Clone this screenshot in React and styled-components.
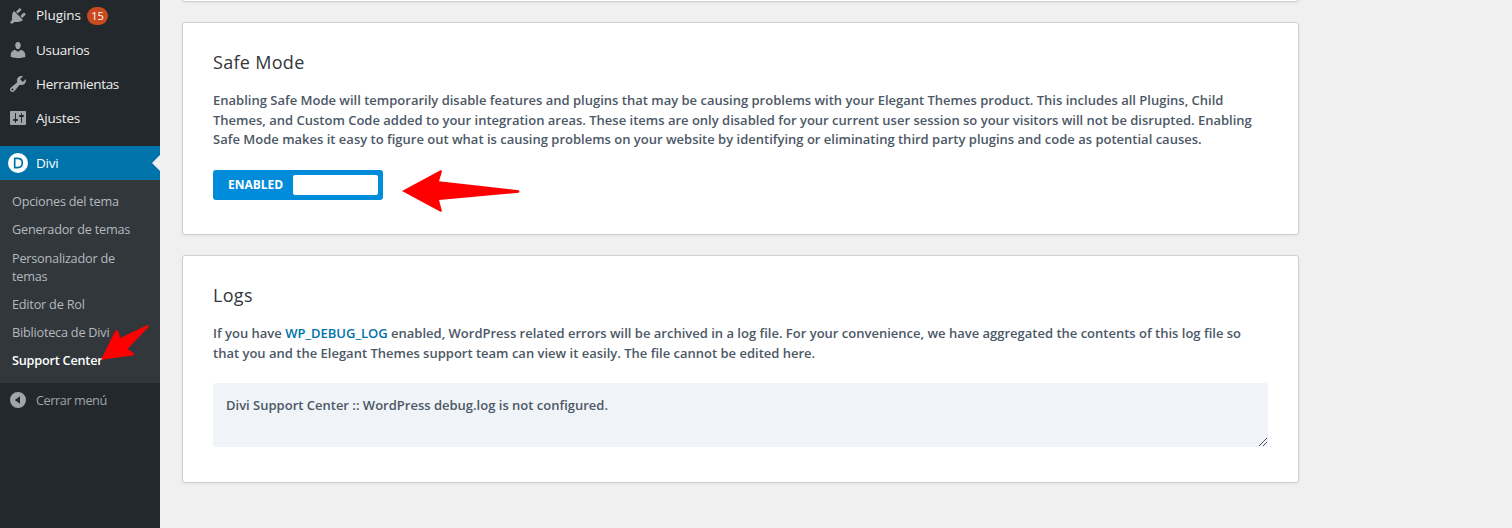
import React from "react";
import styled, { createGlobalStyle, css } from "styled-components";

const GlobalStyle = createGlobalStyle`
  * { box-sizing: border-box; }
  body {
    margin: 0;
    background: #f0f0f0;
    overflow: hidden;
  }
`;
const Page = styled.div`
  display: flex;
  position: relative;
  height: 528px;
  overflow: hidden;
  font-family: "Open Sans", "Noto Sans", sans-serif;
`;
const Sidebar = styled.nav`
  width: 160px;
  flex: none;
  background: #23282d;
  color: #eee;
`;
const Label = styled.span`
  padding-bottom: 1px;
`;
const MenuItem = styled.div`
  display: flex;
  align-items: center;
  position: relative;
  height: 34px;
  padding-left: 8px;
  font-size: 13.5px;
  letter-spacing: ${(props) => props.$spacing || -0.2}px;
  color: #eee;
  ${(props) =>
    props.$current &&
    css`
      background: #0073aa;
      color: #fff;
      /* notch that points at the open page */
      &::after {
        content: "";
        position: absolute;
        right: 0;
        top: 9px;
        border: 8px solid transparent;
        border-right-color: #f0f0f0;
      }
    `}
`;
const MenuList = styled.div`
  margin-top: -1px;
  padding-bottom: 11px;
  ${MenuItem}:first-child ${Label} {
    padding-bottom: 3px;
  }
`;
const Icon = styled.svg`
  width: 20px;
  height: 20px;
  margin-right: 8px;
  flex: none;
  fill: #a0a5aa;
`;
const Count = styled.span`
  width: 21px;
  height: 18px;
  margin-left: 6px;
  border-radius: 9px;
  background: #ca4a1f;
  color: #fff;
  font-size: 11px;
  line-height: 18px;
  text-align: center;
  letter-spacing: 0;
`;
const SubMenu = styled.div`
  height: 203px;
  padding-top: 7px;
  background: #32373c;
`;
const SubItem = styled.div`
  padding: 5.2px 12px 5px;
  font-size: 12.7px;
  line-height: 18px;
  letter-spacing: -0.22px;
  font-weight: ${(props) => (props.$current ? 600 : 400)};
  color: ${(props) => (props.$current ? "#fff" : "#b4b9be")};
`;
const Collapse = styled(MenuItem)`
  font-size: 12.7px;
  color: #a0a5aa;
`;
const Content = styled.main`
  display: flex;
  flex-direction: column;
  gap: 20px;
  width: 1117px;
  margin-left: 22px;
`;
const Card = styled.section`
  flex: none;
  height: ${(props) => props.$height}px;
  padding: 29px 30px;
  border: 1px solid #ccd0d4;
  border-radius: 3px;
  background: #fff;
  box-shadow: 0 1px 3px rgba(0, 0, 0, 0.06);
`;
/* the card above is scrolled out, only its lower edge is left */
const ScrolledCard = styled(Card)`
  margin-top: -58px;
`;
const CardTitle = styled.h3`
  margin: 0 0 19px;
  font-size: 18px;
  font-weight: 500;
  line-height: 20px;
  letter-spacing: 0.3px;
  color: #32373c;
`;
const Text = styled.p`
  margin: 0;
  font-size: 13px;
  font-weight: 600;
  line-height: 19.5px;
  color: #4c5866;
`;
const Line = styled.span`
  display: block;
  white-space: nowrap;
`;
const DocLink = styled.a`
  color: #0073aa;
`;
const Toggle = styled.div`
  display: flex;
  align-items: center;
  justify-content: space-between;
  width: 170px;
  height: 30px;
  margin-top: 20px;
  padding: 0 5px 0 15px;
  border-radius: 3px;
  background: #008bdb;
  color: #fff;
  font-size: 12px;
  font-weight: 700;
`;
const Knob = styled.div`
  width: 85px;
  height: 20px;
  border-radius: 2px;
  background: #fff;
`;
const LogBox = styled.div`
  display: flex;
  justify-content: space-between;
  height: 64px;
  margin-top: 20px;
  padding: 13px 0 0 13px;
  border-radius: 3px;
  background: #f0f3f8;
`;
const Grip = styled.svg`
  align-self: flex-end;
  width: 10px;
  height: 10px;
  stroke: #4c5866;
`;
const Pointer = styled.svg`
  position: absolute;
  left: ${(props) => props.$x}px;
  top: ${(props) => props.$y}px;
  fill: #f00;
`;

const menu = [
  {
    label: "Plugins",
    count: 15,
    spacing: -0.05,
    path: "M13.11 4.36L9.87 7.6 8 5.73l3.24-3.24c.35-.34 1.05-.2 1.56.32.52.51.66 1.21.31 1.55zm-8 1.77l.91-1.12 9.01 9.01-1.19.84c-.71.71-2.63 1.16-3.82 1.16H6.14L4.9 17.26c-.59.59-1.54.59-2.12 0-.59-.58-.59-1.53 0-2.12l1.24-1.24v-3.88c0-1.13.4-3.19 1.09-3.89zm7.26 3.97l3.24-3.24c.34-.35 1.04-.21 1.55.31.52.51.66 1.21.31 1.55l-3.24 3.25z",
  },
  {
    label: "Usuarios",
    spacing: -0.25,
    path: "M10 9.25c-2.27 0-2.73-3.44-2.73-3.44C7 4.02 7.82 2 9.97 2c2.16 0 2.98 2.02 2.71 3.81 0 0-.41 3.44-2.68 3.44zm0 2.57L12.72 10c2.39 0 4.52 2.33 4.52 4.53v2.49s-3.65 1.13-7.24 1.13c-3.65 0-7.24-1.13-7.24-1.13v-2.49c0-2.25 1.94-4.48 4.47-4.48z",
  },
  {
    label: "Herramientas",
    spacing: -0.3,
    path: "M16.68 9.77c-1.34 1.34-3.3 1.67-4.95.99l-5.41 6.52c-.99.99-2.59.99-3.58 0s-.99-2.59 0-3.57l6.52-5.42c-.68-1.65-.35-3.61.99-4.95 1.28-1.28 3.12-1.62 4.72-1.06l-2.89 2.89 2.82 2.82 2.86-2.87c.53 1.58.18 3.39-1.08 4.65zM3.81 16.21c.4.39 1.04.39 1.43 0 .4-.4.4-1.04 0-1.43-.39-.4-1.03-.4-1.43 0-.39.39-.39 1.03 0 1.43z",
  },
  {
    label: "Ajustes",
    path: "M18 16V4c0-.55-.45-1-1-1H3c-.55 0-1 .45-1 1v12c0 .55.45 1 1 1h14c.55 0 1-.45 1-1zM8 11h1c.55 0 1 .45 1 1s-.45 1-1 1H8v1.5c0 .28-.22.5-.5.5s-.5-.22-.5-.5V13H6c-.55 0-1-.45-1-1s.45-1 1-1h1V5.5c0-.28.22-.5.5-.5s.5.22.5.5V11zm5-2h-1c-.55 0-1-.45-1-1s.45-1 1-1h1V5.5c0-.28.22-.5.5-.5s.5.22.5.5V7h1c.55 0 1 .45 1 1s-.45 1-1 1h-1v5.5c0 .28-.22.5-.5.5s-.5-.22-.5-.5V9z",
  },
];

const subMenu = [
  { label: "Opciones del tema" },
  { label: "Generador de temas" },
  { label: "Personalizador de temas" },
  { label: "Editor de Rol" },
  { label: "Biblioteca de Divi" },
  { label: "Support Center", current: true },
];

const AdminMenu = () => (
  <Sidebar>
    <MenuList>
      {menu.map((item) => (
        <MenuItem key={item.label} $spacing={item.spacing}>
          <Icon viewBox="0 0 20 20">
            <path d={item.path} />
          </Icon>
          <Label>{item.label}</Label>
          {item.count && <Count>{item.count}</Count>}
        </MenuItem>
      ))}
    </MenuList>
    <MenuItem $current>
      <Icon viewBox="0 0 20 20">
        <circle cx="10" cy="10" r="10" fill="#fff" />
        <path
          d="M6.7 5.4h2.8c3 0 4.8 1.8 4.8 4.6s-1.8 4.6-4.8 4.6H6.7z"
          fill="none"
          stroke="#0073aa"
          strokeWidth="1.7"
        />
      </Icon>
      <Label>Divi</Label>
    </MenuItem>
    <SubMenu>
      {subMenu.map((item) => (
        <SubItem key={item.label} $current={item.current}>
          {item.label}
        </SubItem>
      ))}
    </SubMenu>
    <Collapse $spacing={-0.42}>
      <Icon viewBox="0 0 20 20">
        <path
          fillRule="evenodd"
          d="M10 2a8 8 0 1 1 0 16 8 8 0 0 1 0-16zM12 6.2v7.6L6.8 10z"
        />
      </Icon>
      <Label>Cerrar menú</Label>
    </Collapse>
  </Sidebar>
);

const App = () => {
  return (
    <>
      <GlobalStyle />
      <Page>
        <AdminMenu />
        <Content>
          <ScrolledCard $height={60} />
          <Card $height={213}>
            <CardTitle>Safe Mode</CardTitle>
            <Text>
              <Line>
                Enabling Safe Mode will temporarily disable features and plugins that may be causing problems with your Elegant Themes product. This includes all Plugins, Child
              </Line>
              <Line>
                Themes, and Custom Code added to your integration areas. These items are only disabled for your current user session so your visitors will not be disrupted. Enabling
              </Line>
              <Line>
                Safe Mode makes it easy to figure out what is causing problems on your website by identifying or eliminating third party plugins and code as potential causes.
              </Line>
            </Text>
            <Toggle>
              ENABLED
              <Knob />
            </Toggle>
          </Card>
          <Card $height={228}>
            <CardTitle>Logs</CardTitle>
            <Text>
              <Line>
                If you have <DocLink>WP_DEBUG_LOG</DocLink> enabled, WordPress related errors will be archived in a log file. For your convenience, we have aggregated the contents of this log file so
              </Line>
              <Line>
                that you and the Elegant Themes support team can view it easily. The file cannot be edited here.
              </Line>
            </Text>
            <LogBox>
              <Text>Divi Support Center :: WordPress debug.log is not configured.</Text>
              <Grip viewBox="0 0 10 10">
                <path d="M1 9L9 1M5 9l4-4" />
              </Grip>
            </LogBox>
          </Card>
        </Content>
        <Pointer $x={400} $y={168} width="122" height="46" viewBox="400 168 122 46">
          <path d="M402 191L440.5 170.2Q442.5 170 441.8 172L439 181.2L518.5 190.3Q520.5 191.5 518.5 192.8L439 200L441.8 210.5Q442 212.5 440 211.5Z" />
        </Pointer>
        <Pointer $x={98} $y={322} width="54" height="42" viewBox="98 322 54 42">
          <path d="M101 359.8L115.5 330.5Q117.5 329.5 118.3 331.5L120 338L147.5 325Q149.3 325.5 148 327.5L127.5 349L133.500 353Q134.800 355 132.500 355.500Z" />
        </Pointer>
      </Page>
    </>
  );
};

export default App;
